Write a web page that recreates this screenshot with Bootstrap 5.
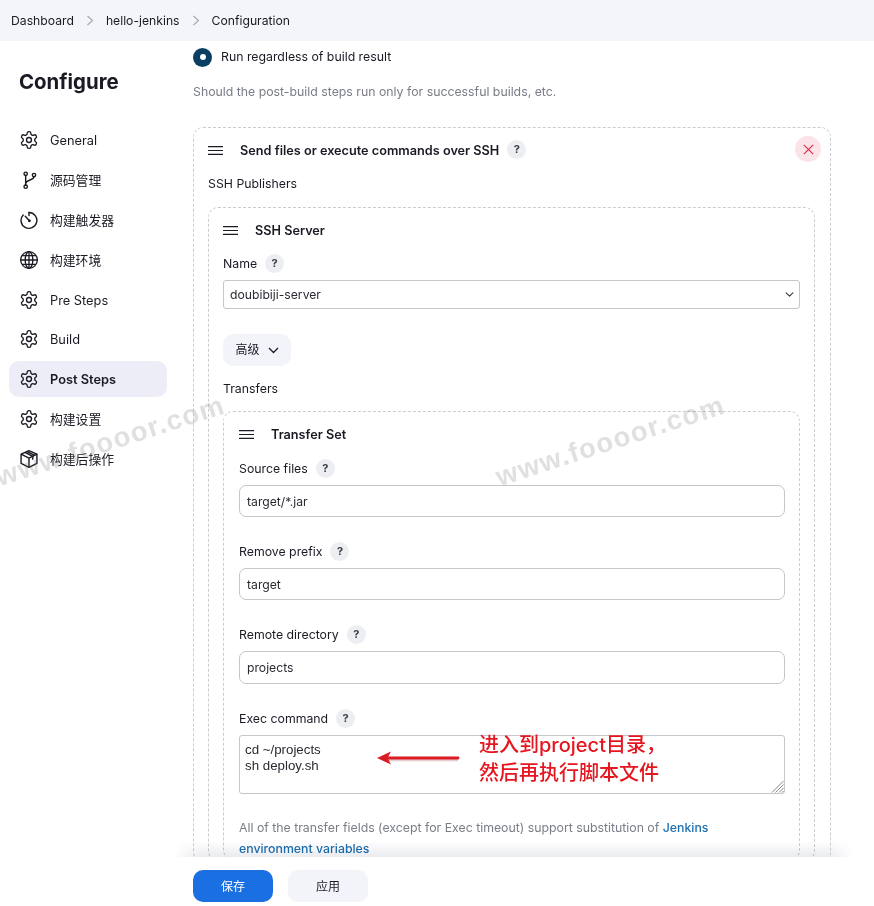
<!DOCTYPE html>
<html lang="en">
<head>
    <meta charset="UTF-8">
    <meta name="viewport" content="width=device-width, initial-scale=1.0">
    <title>hello-jenkins Config</title>
    <link href="https://cdn.jsdelivr.net/npm/bootstrap@5.3.2/dist/css/bootstrap.min.css" rel="stylesheet">
    <style>
        html, body { height: 100%; overflow: hidden; }
        body {
            font-family: Inter, "Noto Sans CJK SC", sans-serif;
            font-size: 12.3px;
            line-height: 20px;
            color: #1a1a24;
            background: #fff;
        }
        .page-root { position: relative; height: 906px; overflow: hidden; }

        .top-crumbs { height: 41px; background: #f4f5f9; padding-left: 11px; }
        .top-crumbs .breadcrumb { --bs-breadcrumb-margin-bottom: 0; font-size: 12.2px; }
        .top-crumbs .breadcrumb-item + .breadcrumb-item { padding-left: 0; }
        .top-crumbs .breadcrumb-item + .breadcrumb-item::before { display: none; }
        .top-crumbs a { color: #1a1a24; text-decoration: none; }
        .crumb-sep { width: 8px; height: 11px; margin: 0 12px; color: #a3a5ad; }

        .side-col { width: 193px; flex-shrink: 0; padding: 28px 26px 0 9px; }
        .side-title { font-size: 20.4px; font-weight: 700; line-height: 26px; margin: 0 0 27px 10px; }
        .side-link {
            height: 36px; margin-bottom: 3.9px; padding: 2px 0 0 10px;
            gap: 11px; font-size: 12.8px; color: #1a1a24; border-radius: 10px; text-decoration: none;
        }
        .side-link svg { width: 20px; height: 20px; flex-shrink: 0; margin-top: -2px; }
        .side-link.is-active { background: #ecedf6; font-weight: 600; }

        .main-col { width: 638px; height: 865px; overflow: hidden; }
        .radio-row { height: 20px; margin-top: 6px; gap: 9px; }
        .radio-dot { width: 19px; height: 19px; border-radius: 50%; background: #0b3e63; }
        .radio-dot::after { content: ""; width: 6px; height: 6px; border-radius: 50%; background: #fff; }
        .hint-text { color: #7a7d87; margin: 14px 0 0; line-height: 21px; }

        .dash-box { border: 1px dashed #c9ccd1; border-radius: 10px; }
        .box-outer { margin-top: 25px; padding: 12px 15px 0 14px; position: relative; }
        .box-inner { margin-top: 14px; padding: 12px 14px 0 14px; }
        .box-third { margin-top: 13px; padding: 12px 14px 0 15px; }
        .box-head { height: 20px; gap: 17px; font-size: 12.7px; font-weight: 600; }
        .head-text { padding-top: 2px; }
        .head-help { margin-bottom: 2px; }
        .drag-lines { width: 15px; height: 9px; flex-shrink: 0; color: #1a1a24; }
        .plain-label { margin-top: 13px; height: 20px; padding-top: 1px; }
        .field-label { height: 20px; gap: 8px; margin-bottom: 7px; }
        .field-text { padding-top: 2px; }
        .name-label { margin-top: 13px; }
        .first-label { margin-top: 14px; }
        .help-mark {
            width: 19px; height: 19px; border-radius: 50%; background: #eceef1;
            font-size: 11px; font-weight: 700; color: #3a3c45; line-height: 19px; text-align: center;
        }
        .jk-input, .jk-select {
            font-size: 12.2px; color: #2a2a33; border: 1px solid #c4c6cb;
        }
        .jk-input { height: 32px; padding: 0 7px; border-radius: 7px; line-height: 30px; margin-bottom: 24px; min-height: 0; }
        .dir-input { height: 33px; }
        .jk-select {
            height: 29px; padding: 0 24px 0 6px; border-radius: 3px; line-height: 27px;
            background-position: right 4px center; background-size: 11px 9px;
        }
        .area-wrap { position: relative; }
        .jk-area {
            height: 59px; font-family: "Liberation Sans", sans-serif; font-size: 13.3px; line-height: 16px;
            padding: 6px 5px; border-radius: 3px; margin-bottom: 0; min-height: 0; resize: none;
        }
        .area-grip { position: absolute; right: 1px; bottom: 1px; width: 13px; height: 13px; color: #777; }
        .adv-btn {
            width: 68px; height: 32px; margin: 25px 0 12px; padding: 0; gap: 8px; font-size: 12px;
            color: #1a1a24; border: 0; border-radius: 10px; background: #f3f4f9;
        }
        .adv-btn svg { width: 11px; height: 7px; }
        .close-round {
            position: absolute; top: 8px; right: 9px; width: 26px; height: 26px; border-radius: 50%;
            background: #fbe4e8; color: #d8294b;
        }
        .close-round svg { width: 11px; height: 11px; }
        .subst-note { color: #7a7d87; margin: 23px 0 0; line-height: 21px; width: 500px; }
        .subst-note a { color: #1d6fb0; text-decoration: none; font-weight: 500; }

        .bottom-bar {
            position: absolute; left: 0; right: 0; bottom: 0; height: 49px; background: #fff;
            padding: 13px 0 0 193px; gap: 15px;
        }
        .bottom-bar::before {
            content: ""; position: absolute; left: 175px; right: 20px; top: -16px; height: 16px;
            background: linear-gradient(to bottom, rgba(232,233,238,0), rgba(232,233,238,.9));
            mix-blend-mode: multiply;
            -webkit-mask-image: linear-gradient(to right, transparent, #000 24px, #000 calc(100% - 24px), transparent);
            mask-image: linear-gradient(to right, transparent, #000 24px, #000 calc(100% - 24px), transparent);
        }
        .foot-btn { width: 80px; height: 32px; border-radius: 10px; font-size: 12px; padding: 1px 0 0; border: 0; }
        .foot-save, .foot-save:hover { background: #1a6fe3; color: #fff; }
        .foot-apply, .foot-apply:hover { background: #f3f4f9; color: #1a1a24; }

        .note-text {
            position: absolute; left: 479px; top: 731px; color: #e5161f; font-size: 20px; line-height: 28px;
            font-weight: 500; white-space: nowrap;
        }
        .note-arrow { position: absolute; left: 374px; top: 749px; width: 86px; height: 18px; }
        .mark-text {
            position: absolute; font-family: "Liberation Sans", sans-serif; font-weight: 700; font-size: 27.5px; line-height: 32px;
            letter-spacing: 1.3px; color: rgba(120,120,120,.23); transform: rotate(-18deg); white-space: nowrap; pointer-events: none;
        }
        .mark-a { left: -9px; top: 425px; }
        .mark-b { left: 491px; top: 425px; }
    </style>
</head>
<body>
    <svg width="0" height="0" class="position-absolute">
        <symbol id="ic-gear" viewBox="0 0 24 24" fill="none" stroke="currentColor" stroke-width="1.6" stroke-linecap="round" stroke-linejoin="round">
            <path d="M12.22 2h-.44a2 2 0 0 0-2 2v.18a2 2 0 0 1-1 1.73l-.43.25a2 2 0 0 1-2 0l-.15-.08a2 2 0 0 0-2.73.73l-.22.38a2 2 0 0 0 .73 2.73l.15.1a2 2 0 0 1 1 1.72v.51a2 2 0 0 1-1 1.74l-.15.09a2 2 0 0 0-.73 2.73l.22.38a2 2 0 0 0 2.73.73l.15-.08a2 2 0 0 1 2 0l.43.25a2 2 0 0 1 1 1.73V20a2 2 0 0 0 2 2h.44a2 2 0 0 0 2-2v-.18a2 2 0 0 1 1-1.73l.43-.25a2 2 0 0 1 2 0l.15.08a2 2 0 0 0 2.73-.73l.22-.39a2 2 0 0 0-.73-2.73l-.15-.08a2 2 0 0 1-1-1.74v-.5a2 2 0 0 1 1-1.74l.15-.09a2 2 0 0 0 .73-2.73l-.22-.38a2 2 0 0 0-2.73-.73l-.15.08a2 2 0 0 1-2 0l-.43-.25a2 2 0 0 1-1-1.73V4a2 2 0 0 0-2-2z"/>
            <circle cx="12" cy="12" r="3"/>
        </symbol>
        <symbol id="ic-branch" viewBox="0 0 24 24" fill="none" stroke="currentColor" stroke-width="1.7" stroke-linecap="round">
            <circle cx="8" cy="4.5" r="2"/><circle cx="8" cy="20" r="2"/><circle cx="18" cy="6" r="2"/>
            <path d="M8 6.5V18M18 8c0 4.5-10 3.5-10 8.5"/>
        </symbol>
        <symbol id="ic-timer" viewBox="0 0 24 24" fill="none" stroke="currentColor" stroke-width="1.7" stroke-linecap="round">
            <path d="M12 3a9.5 9.5 0 1 1-7 3"/><path d="M12 6.5V3"/><path d="M7.5 7.5l5 5.5"/><circle cx="12.5" cy="13" r=".9" fill="currentColor"/>
        </symbol>
        <symbol id="ic-globe" viewBox="0 0 24 24" fill="none" stroke="currentColor" stroke-width="1.6">
            <circle cx="12" cy="12" r="10"/><ellipse cx="12" cy="12" rx="4.6" ry="10"/><path d="M12 2v20M2 12h20M3.6 6.8h16.8M3.6 17.2h16.8"/>
        </symbol>
        <symbol id="ic-cube" viewBox="0 0 24 24" fill="none" stroke="currentColor" stroke-width="1.7" stroke-linejoin="round">
            <path d="M12 2l9.5 4.2v11L12 22l-9.5-4.8v-11z"/><path d="M2.5 6.2L12 11l9.5-4.8M12 11v11"/><path d="M7 4l9.5 4.8v4M9.5 3l9.5 4.6"/>
        </symbol>
        <symbol id="ic-drag" viewBox="0 0 15 9" fill="none" stroke="currentColor" stroke-width="1.1">
            <path d="M0 .6h15M0 4.5h15M0 8.4h15"/>
        </symbol>
    </svg>

    <div class="page-root">
        <nav class="top-crumbs d-flex align-items-center" aria-label="breadcrumb">
            <ol class="breadcrumb align-items-center">
                <li class="breadcrumb-item"><a href="#">Dashboard</a></li>
                <li class="breadcrumb-item d-flex align-items-center">
                    <svg class="crumb-sep" viewBox="0 0 8 11" fill="none" stroke="currentColor" stroke-width="1.1"><path d="M1.5 1l5 4.5-5 4.5"/></svg>
                    <a href="#">hello-jenkins</a>
                </li>
                <li class="breadcrumb-item d-flex align-items-center">
                    <svg class="crumb-sep" viewBox="0 0 8 11" fill="none" stroke="currentColor" stroke-width="1.1"><path d="M1.5 1l5 4.5-5 4.5"/></svg>
                    <a href="#">Configuration</a>
                </li>
            </ol>
        </nav>

        <div class="d-flex">
            <aside class="side-col">
                <h1 class="side-title">Configure</h1>
                <div class="nav flex-column">
                    <a class="side-link d-flex align-items-center" href="#"><svg><use href="#ic-gear"/></svg>General</a>
                    <a class="side-link d-flex align-items-center" href="#"><svg><use href="#ic-branch"/></svg>源码管理</a>
                    <a class="side-link d-flex align-items-center" href="#"><svg><use href="#ic-timer"/></svg>构建触发器</a>
                    <a class="side-link d-flex align-items-center" href="#"><svg><use href="#ic-globe"/></svg>构建环境</a>
                    <a class="side-link d-flex align-items-center" href="#"><svg><use href="#ic-gear"/></svg>Pre Steps</a>
                    <a class="side-link d-flex align-items-center" href="#"><svg><use href="#ic-gear"/></svg>Build</a>
                    <a class="side-link is-active d-flex align-items-center" href="#"><svg><use href="#ic-gear"/></svg>Post Steps</a>
                    <a class="side-link d-flex align-items-center" href="#"><svg><use href="#ic-gear"/></svg>构建设置</a>
                    <a class="side-link d-flex align-items-center" href="#"><svg><use href="#ic-cube"/></svg>构建后操作</a>
                </div>
            </aside>

            <main class="main-col">
                <div class="radio-row d-flex align-items-center">
                    <span class="radio-dot d-flex align-items-center justify-content-center"></span>
                    <span>Run regardless of build result</span>
                </div>
                <p class="hint-text">Should the post-build steps run only for successful builds, etc.</p>

                <div class="dash-box box-outer">
                    <button type="button" class="close-round btn d-flex align-items-center justify-content-center p-0 border-0" aria-label="Delete">
                        <svg viewBox="0 0 11 11" fill="none" stroke="currentColor" stroke-width="1.1"><path d="M.8.8l9.4 9.4M10.2.8L.8 10.2"/></svg>
                    </button>
                    <div class="box-head d-flex align-items-center">
                        <svg class="drag-lines"><use href="#ic-drag"/></svg>
                        <span class="d-flex align-items-center gap-2"><span class="head-text">Send files or execute commands over SSH</span> <span class="help-mark head-help">?</span></span>
                    </div>
                    <div class="plain-label">SSH Publishers</div>

                    <div class="dash-box box-inner">
                        <div class="box-head d-flex align-items-center">
                            <svg class="drag-lines"><use href="#ic-drag"/></svg>
                            <span class="head-text">SSH Server</span>
                        </div>
                        <div class="field-label name-label d-flex align-items-center"><span class="field-text">Name</span><span class="help-mark">?</span></div>
                        <select class="form-select jk-select">
                            <option>doubibiji-server</option>
                        </select>
                        <button type="button" class="btn adv-btn d-flex align-items-center justify-content-center">
                            高级
                            <svg viewBox="0 0 11 7" fill="none" stroke="currentColor" stroke-width="1.3"><path d="M1 1l4.5 4.5L10 1"/></svg>
                        </button>
                        <div class="plain-label mt-0">Transfers</div>

                        <div class="dash-box box-third">
                            <div class="box-head d-flex align-items-center">
                                <svg class="drag-lines"><use href="#ic-drag"/></svg>
                                <span class="head-text">Transfer Set</span>
                            </div>
                            <div class="field-label first-label d-flex align-items-center"><span class="field-text">Source files</span><span class="help-mark">?</span></div>
                            <input class="form-control jk-input" value="target/*.jar">
                            <div class="field-label d-flex align-items-center"><span class="field-text">Remove prefix</span><span class="help-mark">?</span></div>
                            <input class="form-control jk-input" value="target">
                            <div class="field-label d-flex align-items-center"><span class="field-text">Remote directory</span><span class="help-mark">?</span></div>
                            <input class="form-control jk-input dir-input" value="projects">
                            <div class="field-label d-flex align-items-center"><span class="field-text">Exec command</span><span class="help-mark">?</span></div>
                            <div class="area-wrap">
                                <textarea class="form-control jk-input jk-area" rows="3">cd ~/projects
sh deploy.sh</textarea>
                                <svg class="area-grip" viewBox="0 0 13 13" fill="none" stroke="currentColor" stroke-width=".9"><path d="M1 12.5L12.5 1M4.5 12.5l8-8M8 12.5l4.5-4.5M11 12.5l1.5-1.5"/></svg>
                            </div>
                            <p class="subst-note">All of the transfer fields (except for Exec timeout) support substitution of <a href="#">Jenkins environment variables</a></p>
                        </div>
                    </div>
                </div>
            </main>
        </div>

        <div class="bottom-bar d-flex">
            <button type="button" class="btn foot-btn foot-save">保存</button>
            <button type="button" class="btn foot-btn foot-apply">应用</button>
        </div>

        <svg class="note-arrow" viewBox="0 0 86 18" fill="none">
            <path d="M84 10.5H10" stroke="#8a1a1f" stroke-opacity=".22" stroke-width="3.5"/>
            <path d="M84 9H10" stroke="#dc1a22" stroke-width="2.8" stroke-linecap="round"/>
            <path d="M3 9l14-6.5-3.5 6.5 3.5 6.5z" fill="#dc1a22"/>
        </svg>
        <div class="note-text">进入到project目录，<br>然后再执行脚本文件</div>

        <div class="mark-text mark-a">www.foooor.com</div>
        <div class="mark-text mark-b">www.foooor.com</div>
    </div>

    <script src="https://cdn.jsdelivr.net/npm/bootstrap@5.3.2/dist/js/bootstrap.bundle.min.js"></script>
</body>
</html>
